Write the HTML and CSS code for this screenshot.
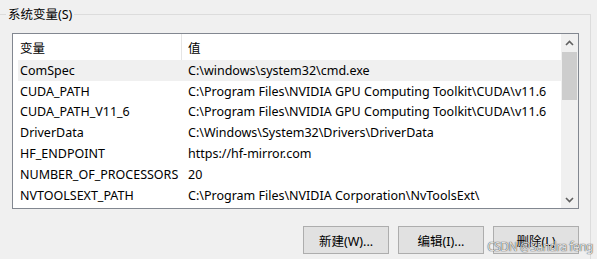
FILE: index.html
```html
<!DOCTYPE html>
<html>
<head>
    <title>系统变量</title>
    <meta charset="utf-8">
    <link rel="stylesheet" href="styles.css">
</head>
<body>
    <fieldset class="group">
        <legend>系统变量(S)</legend>

        <div class="listbox">
            <div class="list">
                <div class="header">
                    <div class="cell name">变量</div>
                    <div class="cell value">值</div>
                </div>
                <div class="row selected">
                    <div class="cell name">ComSpec</div>
                    <div class="cell value">C:\windows\system32\cmd.exe</div>
                </div>
                <div class="row">
                    <div class="cell name">CUDA_PATH</div>
                    <div class="cell value">C:\Program Files\NVIDIA GPU Computing Toolkit\CUDA\v11.6</div>
                </div>
                <div class="row">
                    <div class="cell name">CUDA_PATH_V11_6</div>
                    <div class="cell value">C:\Program Files\NVIDIA GPU Computing Toolkit\CUDA\v11.6</div>
                </div>
                <div class="row">
                    <div class="cell name">DriverData</div>
                    <div class="cell value">C:\Windows\System32\Drivers\DriverData</div>
                </div>
                <div class="row">
                    <div class="cell name">HF_ENDPOINT</div>
                    <div class="cell value">https://hf-mirror.com</div>
                </div>
                <div class="row">
                    <div class="cell name">NUMBER_OF_PROCESSORS</div>
                    <div class="cell value">20</div>
                </div>
                <div class="row">
                    <div class="cell name">NVTOOLSEXT_PATH</div>
                    <div class="cell value">C:\Program Files\NVIDIA Corporation\NvToolsExt\</div>
                </div>
            </div>

            <!-- 스크롤바 -->
            <div class="scrollbar">
                <div class="arrow">
                    <svg width="9" height="6" viewBox="0 0 9 6"><polyline points="1,5 4.5,1.5 8,5" fill="none" stroke="#606060" stroke-width="1.6"/></svg>
                </div>
                <div class="thumb"></div>
                <div class="track"></div>
                <div class="arrow">
                    <svg width="9" height="6" viewBox="0 0 9 6"><polyline points="1,1 4.5,4.5 8,1" fill="none" stroke="#606060" stroke-width="1.6"/></svg>
                </div>
            </div>
        </div>

        <div class="buttons">
            <button class="btn">新建(W)...</button>
            <button class="btn">编辑(I)...</button>
            <button class="btn">删除(L)</button>
        </div>
    </fieldset>

    <div class="watermark">CSDN @Sandra feng</div>
</body>
</html>
```

FILE: styles.css
```css
* {
    box-sizing: border-box;
}

body {
    margin: 0;
    height: 259px;
    background: #f0f0f0;
    font-family: "Noto Sans", "Noto Sans CJK SC", sans-serif;
    font-size: 12.5px;
    color: #000;
    overflow: hidden;
}

.group {
    margin: 6px 6px 0 -10px;
    border: 1px solid #dcdcdc;
    border-bottom: none;
    padding: 10px 11px 0 21px;
    height: 253px;
    min-width: 0;
}

.group legend {
    margin-left: -6px;
    padding: 0 2px;
    line-height: 17px;
}

.listbox {
    height: 176px;
    border: 1px solid #828790;
    display: flex;
}

.list {
    flex: 1;
    background: #fff;
    padding-left: 5px;
    overflow: hidden;
}

.header, .row {
    display: grid;
    grid-template-columns: 164px 1fr;
}

.header {
    height: 26px;
}

.row {
    height: 20.8px;
}

.row.selected {
    background: #f0f0f0;
}

.cell {
    display: flex;
    align-items: center;
    white-space: nowrap;
}

.cell.name {
    padding-left: 2px;
}

.cell.value {
    padding-left: 6px;
}

.header .cell.name {
    border-right: 1px solid #e5e5e5;
}

.scrollbar {
    width: 17px;
    background: #f0f0f0;
    display: flex;
    flex-direction: column;
}

.arrow {
    height: 17px;
    display: flex;
    align-items: center;
    justify-content: center;
}

.thumb {
    height: 48px;
    margin: 1px 1px 0 1px;
    background: #cdcdcd;
}

.track {
    flex: 1;
}

.buttons {
    margin-top: 17px;
    display: flex;
    justify-content: flex-end;
    gap: 9px;
}

.btn {
    width: 86px;
    height: 28px;
    padding: 0;
    border: 1px solid #adadad;
    background: #e1e1e1;
    font-family: inherit;
    font-size: 12.5px;
    color: #000;
}

.watermark {
    position: absolute;
    right: 4px;
    top: 238px;
    font-size: 12px;
    letter-spacing: -0.5px;
    line-height: 17px;
    color: rgba(255, 255, 255, 0.85);
    text-shadow: 0 0 1px rgba(0, 0, 0, 0.7), 0 0 1px rgba(0, 0, 0, 0.5);
}
```
